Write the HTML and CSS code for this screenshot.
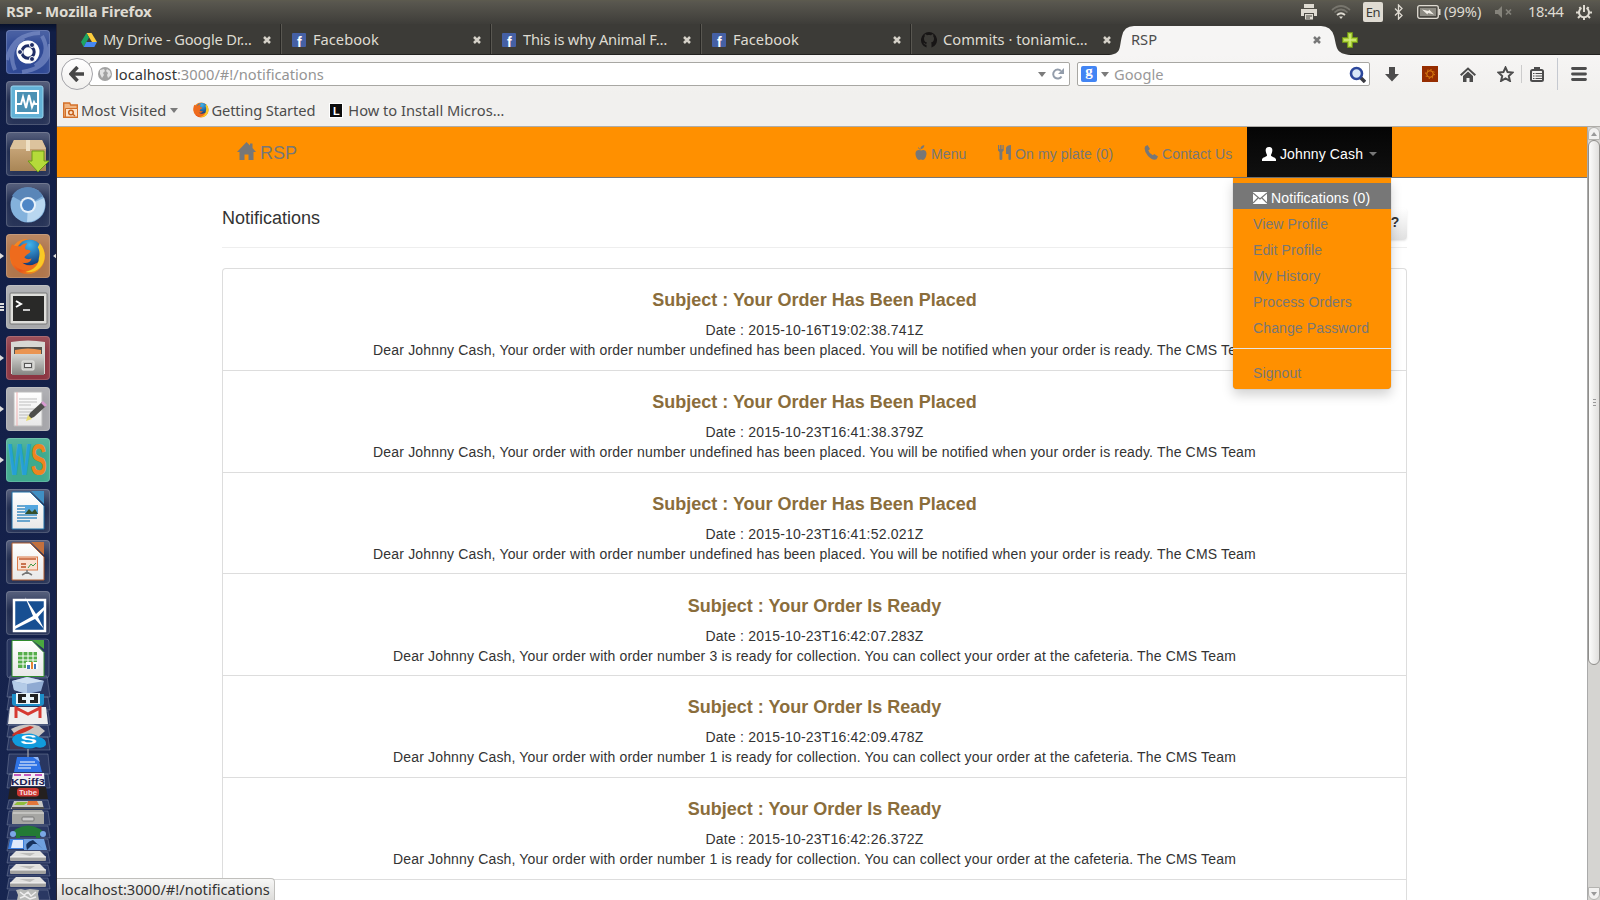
FILE: index.html
```html
<!DOCTYPE html>
<html lang="en">
<head>
<meta charset="utf-8">
<title>RSP</title>
<link rel="stylesheet" href="styles.css">
</head>
<body>
<svg class="defs" width="0" height="0">
  <defs>
    <linearGradient id="paper" x1="0" y1="0" x2="0" y2="1"><stop offset="0" stop-color="#fff"/><stop offset="1" stop-color="#e8e8e8"/></linearGradient>
    <linearGradient id="metal" x1="0" y1="0" x2="0" y2="1"><stop offset="0" stop-color="#d5d5d2"/><stop offset="1" stop-color="#858582"/></linearGradient>
    <linearGradient id="box" x1="0" y1="0" x2="0" y2="1"><stop offset="0" stop-color="#d0ae82"/><stop offset="1" stop-color="#a98656"/></linearGradient>
    <linearGradient id="flame" x1="0" y1="0" x2="1" y2="1"><stop offset="0" stop-color="#ff9a1f"/><stop offset=".6" stop-color="#e8541a"/><stop offset="1" stop-color="#f7b41c"/></linearGradient>
    <radialGradient id="globe" cx=".5" cy=".2" r=".8"><stop offset="0" stop-color="#3fb4ee"/><stop offset="1" stop-color="#123a78"/></radialGradient>
    <symbol id="x" viewBox="0 0 8 8"><path d="M1 1l6 6M7 1L1 7" stroke="currentColor" stroke-width="2.5"/></symbol>
    <symbol id="fb" viewBox="0 0 14 14"><rect width="14" height="14" rx="1" fill="#4560a5"/><text x="5" y="13.5" font-family="Liberation Sans" font-weight="700" font-size="14" fill="#fff">f</text></symbol>
    <symbol id="fox" viewBox="0 0 36 36">
      <circle cx="18" cy="18" r="17" fill="url(#flame)"/><circle cx="20" cy="14" r="12.5" fill="url(#globe)"/>
      <path d="M30 5c7 8 6 18 0 24-4 4-10 5-14 4 8-2 13-6 13-13 1-4 1-8-1-11z" fill="#f9c926"/>
      <path d="M3 6c2 2 5 2 8 2 2-2 4-3 7-3-2 2-3 4-2 6 2 1 4 0 5 2-1 3-5 3-6 6 2 2 4 2 7 1-1 4-5 5-9 4 4 4 10 4 14 0-2 8-15 10-21 3C-1 21 0 12 3 6z" fill="#ee6b1d"/>
    </symbol>
    <symbol id="drive" viewBox="0 0 38 12"><path d="M7 1h24l6 6H1z" fill="#e2e2e0"/><path d="M1 7h36v3q0 1-1 1H2q-1 0-1-1z" fill="#a2a2a0"/><path d="M1 7h36" stroke="#f4f4f4"/><path d="M10 3h16l-5 3z" fill="#bdbdbb"/></symbol>
  </defs>
</svg>

<header class="panel">
  <strong class="panel-title">RSP - Mozilla Firefox</strong>
  <div class="tray">
    <svg class="t-print" width="16" height="16" viewBox="0 0 16 16" fill="#dfdbd2"><path d="M3 0h10v4H3zM0 5h16v7h-3V9H3v3H0z"/><path d="M4 10h8v5.500H4z"/><path d="M5 12h6M5 14h4" stroke="#45443f"/></svg>
    <svg class="t-wifi" width="20" height="14" viewBox="0 0 20 14" fill="none" stroke-width="1.700"><path d="M1 5Q10-3 19 5M3.500 7.500q6.500-6 13 0" stroke="#77756d"/><path d="M6 10q4-3.500 8 0" stroke="#dfdbd2"/><path d="M8 11.500h4L10 14z" fill="#dfdbd2"/></svg>
    <span class="t-lang">En</span>
    <svg class="t-bt" width="10" height="16" viewBox="0 0 10 16" fill="none" stroke="#dfdbd2" stroke-width="1.300"><path d="M1 4.500l7 7-3.500 3.500V1L8 4.500l-7 7"/></svg>
    <svg class="t-bat" width="24" height="14" viewBox="0 0 24 14"><rect x=".7" y=".7" width="20.600" height="12.600" rx="2" fill="none" stroke="#dfdbd2" stroke-width="1.300"/><rect x="3" y="3" width="16" height="8" fill="#8d8b83"/><path d="M22 4h1.500v6H22" fill="#dfdbd2"/><path d="M5 4.500l6.500 1.500.5-1.500 5 5-6-1.500-.5 1.500z" fill="#f2efe8"/></svg>
    <span class="t-pct">(99%)</span>
    <svg class="t-vol" width="18" height="12" viewBox="0 0 18 12"><path d="M0 4h3l4-4v12L3 8H0z" fill="#85837b"/><path d="M11 3.500l5 5m0-5l-5 5" stroke="#85837b" stroke-width="1.700"/></svg>
    <span class="t-time">18:44</span>
    <svg class="t-gear" width="16" height="16" viewBox="0 0 16 16" fill="none" stroke="#dfdbd2"><path d="M5.500 4a5 5 0 1 0 5 0" stroke-width="2"/><path d="M8 1v7" stroke-width="2"/><path d="M3.500 3l1 1.500M12.500 3l-1 1.500M0 8.500h3M13 8.500h3M2 14l2-2M14 14l-2-2M8 13.500V16" stroke-width="2"/></svg>
  </div>
</header>

<div class="desktop">
<aside class="launcher">
  <svg class="tile" style="background:#304a96" viewBox="0 0 44 44"><path d="M1 30Q6 4 34 3M9 40Q0 18 18 8M44 14Q44 38 16 42M36 6q10 18-7 30" fill="none" stroke="#8496cb" stroke-width="4" opacity=".6"/><circle cx="22" cy="22" r="11.500" fill="#fff"/><circle cx="22" cy="22" r="6.200" fill="none" stroke="#1f2d66" stroke-width="3"/><g fill="#1f2d66" stroke="#fff" stroke-width="1"><circle cx="14" cy="22" r="2.500"/><circle cx="26" cy="15" r="2.500"/><circle cx="26" cy="29" r="2.500"/></g></svg>
  <svg class="tile" viewBox="0 0 44 44"><rect x="5" y="5" width="32" height="32" rx="2" fill="#63b1d6" stroke="#9bd6ee"/><rect x="10" y="10" width="22" height="22" fill="#4b91b4" stroke="#fff" stroke-width="2"/><path d="M11 23h4l2-7 3 11 3-13 3 12 2-5 1 2h3" fill="none" stroke="#fff" stroke-width="2"/></svg>
  <svg class="tile" viewBox="0 0 44 44"><path d="M4 16l4-8h28l4 8v23H4z" fill="url(#box)"/><path d="M4 17l4-9h28l4 9z" fill="#dcc39d"/><path d="M20 8h4v11h-4z" fill="#eee0c5"/><path d="M26 19h12v10h5L32 40 22 29h4z" fill="#b5da3a" stroke="#6c9a17"/></svg>
  <svg class="tile" viewBox="0 0 44 44"><circle cx="22" cy="22" r="17.500" fill="#84b2dc"/><path d="M22 22L6 13A18 18 0 0 1 37 13z" fill="#5a86b8"/><path d="M22 22l16-7a18 18 0 0 1-17 24z" fill="#b9d7f0"/><circle cx="22" cy="22" r="8" fill="#e8f1fa"/><circle cx="22" cy="22" r="6" fill="#4f86c6"/></svg>
  <div class="slot"><i class="arrow"></i><svg class="tile" style="background:#b0764c" viewBox="0 0 44 44"><use href="#fox" x="3" y="4" width="37" height="37"/></svg><i class="arrow arrow-r"></i></div>
  <div class="slot"><i class="bars"></i><svg class="tile" style="background:#a7a8ab" viewBox="0 0 44 44"><rect x="4" y="8" width="37" height="31" rx="1" fill="#dededb" stroke="#777"/><rect x="7" y="11" width="31" height="25" fill="#292928"/><path d="M10 16l5 3-5 3" fill="none" stroke="#fff" stroke-width="2"/><path d="M17 25h7" stroke="#fff" stroke-width="1.500"/></svg></div>
  <div class="slot"><i class="arrow"></i><svg class="tile" style="background:#8c3541" viewBox="0 0 44 44"><path d="M5 6q17-3 34 0v32H5z" fill="#d8d8d4"/><path d="M8 11h28v8H8z" fill="#55504b"/><path d="M9 14q13-3 26 0v5H9z" fill="#ea9451"/><path d="M6 18h32v21H6z" fill="url(#metal)"/><rect x="16" y="25" width="12" height="9" rx="1" fill="#c5c5c2" stroke="#e9e9e6"/><rect x="18.500" y="27.500" width="7" height="4" fill="#e9e9e9" stroke="#555"/></svg></div>
  <div class="slot"><i class="arrow"></i><svg class="tile" style="background:#a6a6aa" viewBox="0 0 44 44"><path d="M8 5h28v34H8z" fill="url(#paper)" stroke="#bbb"/><path d="M13 12h18M13 15h18M13 18h12M13 22h17M13 25h14M13 28h17M13 31h10" stroke="#bdbdbd"/><path d="M11 5v34" stroke="#efb1b1"/><path d="M21 33l3-7L36 15l4 4-12 11z" fill="#4d4d4a"/><path d="M35 16l2-2 4 4-2 2z" fill="#d79bd0"/><path d="M20 34l2-6 4 4z" fill="#e8da70"/></svg></div>
  <div class="slot"><i class="arrow"></i><div class="tile ws"><span>W</span><span>S</span></div></div>
  <svg class="tile" viewBox="0 0 44 44"><path d="M6 3h18l14 14v23H6z" fill="url(#paper)" stroke="#1e70a8"/><path d="M25 2h13v13z" fill="#3f8fc3"/><path d="M11 17h8M11 20h8M11 23h8M11 26h20M11 29h20M11 32h13" stroke="#3e8dc2" stroke-width="1.500"/><path d="M19 16h13v9H19z" fill="#53a6df"/><path d="M19 25l4-5 3 3 3-3 3 5z" fill="#34502b"/></svg>
  <svg class="tile" viewBox="0 0 44 44"><path d="M6 3h18l14 14v23H6z" fill="url(#paper)" stroke="#b05a2c"/><path d="M25 2h13v13z" fill="#c2703d"/><rect x="11.500" y="17" width="20" height="13" fill="#fae1d2" stroke="#dc7a49"/><path d="M13 19h17" stroke="#c2582e" stroke-width="1.500"/><path d="M15 24h5M15 27h5" stroke="#c9724e" stroke-width="2"/><path d="M22 28l3-4 2 2 3-3" stroke="#3c9a45" fill="none"/><path d="M21 30v4M16 35l5-3 5 3" stroke="#777" fill="none" stroke-width="1.500"/></svg>
  <svg class="tile" viewBox="0 0 44 44"><rect x="8" y="9" width="31" height="31" fill="#174f92" stroke="#fff" stroke-width="2.500"/><path d="M19 6l11 17 9-8v3l-7 8 6 12-9-10-20 10 0-3 18-10z" fill="#fff"/></svg>
  <svg class="stack" width="57" height="262" viewBox="0 638 57 262">
    <g fill="#8c9bc4" fill-opacity=".16" stroke="#929bb5" stroke-opacity=".4"><rect x="7" y="639" width="42" height="39" rx="3"/><path d="M10 676h37l3 21H7zM9 697h39l2 13H7zM9 711h39l2 14H7zM9 725h39l2 12H7zM9 737h39l2 13H7zM9 754h39l2 20H7zM9 774h39l2 14H7zM9 800h39l2 9H7zM9 811h39l2 14H7zM9 826h39l2 12H7zM9 839h39l2 12H7zM9 852h39l2 11H7zM9 865h39l2 11H7zM9 878h39l2 11H7zM9 890h39l2 10H7z"/></g>
    <path d="M12 640.500h20l12 12v24H12z" fill="url(#paper)" stroke="#2f8a2c"/><path d="M32 640h12v9z" fill="#4aa83f"/><path d="M18 652h19v16H18z" fill="#55ad4b"/><path d="M18 656h19M18 660h19M18 664h19M23 652v16M28 652v16M33 652v16" stroke="#fff"/><path d="M26 662h12v7H26z" fill="#fff"/><path d="M27 665h3v4h-3z" fill="#4378b8"/><path d="M31 662h2v7h-2z" fill="#e58335"/><path d="M34 664h2v5h-2z" fill="#4378b8"/>
    <path d="M12 681l15-4 17 4-3 10-14 3-13-4z" fill="#8faad2"/><path d="M12 681l15-4 17 4-17 3z" fill="#cfdff2"/><path d="M12 681l15 3v10l-13-4z" fill="#b4cbe7"/>
    <path d="M12 694h32v9q0 3-4 3H16q-4 0-4-3z" fill="#1c8ec9"/><path d="M16 693h24v11H16z" fill="#e8f4fa"/><path d="M18 694h8v3h-4v3h4v3h-8zM30 694h8v9h-8v-3h4v-3h-4z" fill="#222"/>
    <path d="M10 707h36l2 17H8z" fill="#eee"/><path d="M16 718v-10l12 6 12-6v10" fill="none" stroke="#d63a32" stroke-width="3"/>
    <path d="M11 729q14-7 28-3l6 5-8 7-21-2z" fill="#c9c5c2"/><path d="M12 735q4-5 18-9l4 1q-8 6-21 9z" fill="#c93328"/><path d="M10 741h15v8H10z" fill="#43364e"/>
    <path d="M12 739q3-6 12-5 9-2 15 3 8 2 7 8-3 4-10 2-7 3-14 0-9-1-10-8z" fill="#119bdc"/><text x="20" y="744" class="skype" textLength="17" lengthAdjust="spacingAndGlyphs">S</text>
    <path d="M28 749v9" stroke="#bbb"/><path d="M17 757h21l4 15H14z" fill="#2f73e5"/><path d="M33 757h5l2 5z" fill="#95b9f7"/><path d="M20 762h15M19 765h18M18 768h13" stroke="#fff" stroke-width="1.200"/>
    <path d="M13 773h31l1 13H11z" fill="#f1eff1"/><path d="M14 775h7M24 775h7M35 775h7" stroke="#c75ac0" stroke-width="2"/><text x="11" y="785" class="kdiff" textLength="34" lengthAdjust="spacingAndGlyphs">KDiff3</text>
    <path d="M10 787h36l2 12H8z" fill="#24201f"/><rect x="17" y="788" width="22" height="8.500" rx="3" fill="#cb3631"/><text x="19" y="795" class="tube" textLength="18" lengthAdjust="spacingAndGlyphs">Tube</text>
    <path d="M14 801h28l2 8H11z" fill="#c8c8c4"/><path d="M17 802h11l-4 3H14z" fill="#8fbd3b"/><path d="M28 801h9l2 4-12 0z" fill="#e1763b"/><path d="M12 807h32v2H12z" fill="#505050"/>
    <path d="M13 810h29l2 3v11H12v-11z" fill="#a6a6a3"/><path d="M13 813h31" stroke="#e0e0dd"/><rect x="22" y="817" width="12" height="4" rx="1" fill="#ccc" stroke="#777"/>
    <path d="M16 829q12-7 24 0l5 4-5 2v3h-4v-2H20v2h-4v-3l-5-1z" fill="#237a35"/><circle cx="13" cy="834" r="3" fill="#7aa7e5"/><circle cx="43" cy="834" r="3" fill="#7aa7e5"/>
    <path d="M10 839h14v10H8z" fill="#3d7fdd"/><path d="M13 840h10v8H11z" fill="#dfe9fa"/><path d="M24 839h20l3 11H24z" fill="#6fa0df"/><path d="M33 840q-9 2-6 10l6-6h4l6 5z" fill="#17325d"/>
    <use href="#drive" x="9" y="850" width="38" height="12"/><use href="#drive" x="9" y="863" width="38" height="12"/><use href="#drive" x="9" y="876" width="38" height="12"/>
    <path d="M16 890l5-1 4 1 5-1 9 1-1 4 1 6H17l1-5z" fill="#b8bab8"/><path d="M20 892l4 3 4-3 3 4 5-4M20 898l5-2 5 3 6-2" fill="none" stroke="#eee" stroke-width="1.500"/>
  </svg>
</aside>

<div class="browser">
  <div class="tabs">
    <div class="tab first"><svg width="16" height="14" viewBox="0 0 16 14"><path d="M5.500 0h5L16 9h-5z" fill="#fccd3d"/><path d="M5.500 0L8 4.500 2.700 14 0 9z" fill="#1da462"/><path d="M5.300 9H16l-2.700 5H2.700z" fill="#4688f4"/></svg><span class="u s1">My Drive - Google Dr…</span><svg class="close" viewBox="0 0 8 8"><use href="#x"/></svg></div>
    <div class="tab"><svg width="14" height="14"><use href="#fb"/></svg><span class="u">Facebook</span><svg class="close" viewBox="0 0 8 8"><use href="#x"/></svg></div>
    <div class="tab"><svg width="14" height="14"><use href="#fb"/></svg><span class="u s3">This is why Animal F…</span><svg class="close" viewBox="0 0 8 8"><use href="#x"/></svg></div>
    <div class="tab"><svg width="14" height="14"><use href="#fb"/></svg><span class="u">Facebook</span><svg class="close" viewBox="0 0 8 8"><use href="#x"/></svg></div>
    <div class="tab last"><svg width="16" height="16" viewBox="0 0 16 16"><path d="M8 0a8 8 0 0 0-2.500 15.600v-2.800c-2.200.4-2.600-1.800-3.400-2 1.500-.4 1.700 1.500 3.400 1 0-.5.300-1 .5-1.200C3.500 10.200 3 8 3 6.500q0-1.200.8-2.200-.3-1 .1-2c1 0 1.700.6 2.200.9 1.200-.3 2.600-.3 3.800 0 .5-.3 1.200-.9 2.200-.9q.4 1 .1 2 .8 1 .8 2.200c0 1.500-.5 3.700-3 4.100.4.400.5.800.5 1.500v3.500A8 8 0 0 0 8 0z" fill="#171515"/></svg><span class="u">Commits · toniamic…</span><svg class="close" viewBox="0 0 8 8"><use href="#x"/></svg></div>
    <div class="active-tab">
      <svg class="curve" width="242" height="30" viewBox="0 0 242 30"><path d="M0 30C13 29 10 22 13 11Q15 1 25 1H212Q222 1 225 11C228 22 226 29 242 30z" fill="#f6f5f4"/></svg>
      <span class="u">RSP</span><svg class="close" viewBox="0 0 8 8"><use href="#x"/></svg>
    </div>
    <svg class="newtab" width="16" height="16" viewBox="0 0 16 16"><path d="M5.500.5h5v5h5v5h-5v5h-5v-5h-5v-5h5z" fill="#a9cf35" stroke="#6d8f1b"/><path d="M8 2v12M2 8h12" stroke="#d5ec80" stroke-width="1.500"/></svg>
  </div>

  <div class="navrow">
    <div class="back"><svg width="16" height="16" viewBox="0 0 16 16"><path d="M8.500 1L2 8l6.500 7M2.500 8H15" fill="none" stroke="#474747" stroke-width="3.500"/></svg></div>
    <div class="url">
      <svg width="14" height="14" viewBox="0 0 14 14"><circle cx="7" cy="7" r="7" fill="#a2a2a2"/><path d="M2 3l4-1 1 2-2 2 1 2-2 3-2-4zM9 2l3 2 1 4-3 3-1-3 1-2-2-2z" fill="#e2e2e2"/></svg>
      <span class="u"><b>localhost</b>:3000/#!/notifications</span>
      <i class="tri"></i>
      <svg class="reload" width="12" height="12" viewBox="0 0 12 12"><path d="M9.500 8.500A4.500 4.500 0 1 1 9 3" fill="none" stroke="#939dab" stroke-width="2"/><path d="M12 0v6H6z" fill="#939dab"/></svg>
    </div>
    <div class="search">
      <span class="g">g</span>
      <i class="tri"></i><span class="u">Google</span>
      <svg class="mag" width="17" height="17" viewBox="0 0 17 17"><path d="M11 11l5 5" stroke="#3b3b42" stroke-width="3.500"/><circle cx="7.500" cy="7.500" r="5.500" fill="#d9e8f8" stroke="#2c479b" stroke-width="2.600"/></svg>
    </div>
    <div class="tools">
      <svg class="i-down" width="14" height="15" viewBox="0 0 14 15"><path d="M4 0h6v7h4l-7 7.500L0 7h4z" fill="#4c4c4c"/></svg>
      <svg class="i-red" width="16" height="16" viewBox="0 0 16 16"><path d="M0 0h16v16H0z" fill="#962d00"/><circle cx="8" cy="8" r="3.300" fill="none" stroke="#e58b12" stroke-width="1"/><circle cx="8" cy="8" r="4.500" fill="none" stroke="#e58b12" stroke-width="1" stroke-dasharray="1.200 2.334"/></svg>
      <svg class="i-home" width="16" height="15" viewBox="0 0 16 15"><path d="M.7 8.300L8 1.500l7.300 6.800" fill="none" stroke="#4c4c4c" stroke-width="2"/><path d="M3 9l5-4.600L13 9v6H9.500v-4h-3v4H3z" fill="#4c4c4c"/></svg>
      <svg class="i-star" width="17" height="16" viewBox="0 0 17 16"><path d="M8.500 1.500l2.100 4.600 4.900.5-3.700 3.400 1.100 4.900-4.400-2.600-4.400 2.600 1.100-4.900L1.500 6.600l4.900-.5z" fill="none" stroke="#4c4c4c" stroke-width="2"/></svg>
      <i class="sep"></i>
      <svg class="i-list" width="14" height="15" viewBox="0 0 14 15"><rect x="1" y="3" width="12" height="11" rx="1.500" fill="none" stroke="#4c4c4c" stroke-width="2"/><path d="M4 0h6v4H4z" fill="#4c4c4c"/><path d="M3 6.500h1.500M5.500 6.500H12M3 9h1.500M5.500 9H12M3 11.500h1.500M5.500 11.500H12" stroke="#4c4c4c" stroke-width="1.200"/></svg>
      <i class="sep tall"></i>
      <svg class="i-menu" width="16" height="14" viewBox="0 0 16 14"><path d="M1.500 1.500h13M1.500 7h13M1.500 12.500h13" stroke="#4c4c4c" stroke-width="2.800" stroke-linecap="round"/></svg>
    </div>
  </div>

  <div class="bookmarks">
    <svg width="15" height="16" viewBox="0 0 15 16"><path d="M.7 15.300V1h6l1 2h6.600v12.300z" fill="#f0b684" stroke="#d3702a" stroke-width="1.400"/><path d="M2.500 6.500h12v8.500h-12z" fill="#fbe2c9" stroke="#d3702a"/><circle cx="8" cy="10.500" r="2.300" fill="none" stroke="#c6601c" stroke-width="1.500"/><path d="M9.500 12l2.500 2" stroke="#c6601c" stroke-width="1.500"/></svg>
    <span class="u b1">Most Visited</span><i class="tri"></i>
    <svg class="b-fox" width="16" height="16"><use href="#fox"/></svg><span class="u b2">Getting Started</span>
    <svg class="b-l" width="14" height="15" viewBox="0 0 14 15"><path d="M0 0h14v15H0z" fill="#fff"/><path d="M1 1h12v13H1z" fill="#0c0c0c"/><text x="4" y="11.500" font-family="Liberation Sans" font-weight="700" font-size="11" fill="#fff">L</text></svg><span class="u b3">How to Install Micros…</span>
  </div>

  <div class="view">
    <main class="page">
      <nav class="navbar">
        <a class="brand"><svg width="19" height="18" viewBox="0 0 19 18"><path d="M9.500 0l3.500 3.500V1.500h2.500V6L19 10h-2.500v8H11.500v-5.500h-4V18H2.500v-8H0z" fill="#777"/></svg>RSP</a>
        <a class="n1"><svg width="12" height="15" viewBox="0 0 12 15" fill="#777"><path d="M6 5.500c2-1.200 5.500-.7 5.500 3 0 3-2 6.500-3.700 6.500-.9 0-1.100-.4-1.800-.4s-.9.400-1.800.4C2.500 15 .5 11.500.5 8.500c0-3.700 3.500-4.200 5.500-3z"/><path d="M5.500 4.200C5.200 1.700 7.500.2 9.300 0c.3 2-1.300 4-3.800 4.200z"/><path d="M3 2.500l2.500 2.300" stroke="#777"/></svg>Menu</a>
        <a class="n2"><svg width="14" height="15" viewBox="0 0 14 15" fill="#777"><path d="M0 0h1.200v4h.9V0h1.500v4h.9V0h1.200v5.500L4.300 7v7q0 1-1.400 1T1.500 14V7L0 5.500zM8 3q1-3 5-3v14q0 1-1.300 1t-1.300-1V9H8z"/></svg>On my plate (0)</a>
        <a class="n3"><svg width="14" height="15" viewBox="0 0 14 15" fill="#777"><path d="M1 1.500L3.500 0 6 4 4.300 5.500q1 3 4.500 4.800L10.300 9l3.700 2.500-1.500 2.800q-4 1.500-8.500-3.300T1 1.500z"/></svg>Contact Us</a>
        <div class="user"><a class="user-link"><svg width="14" height="14" viewBox="0 0 14 14"><path d="M7 0c3 0 3.500 2 3.300 4C10 6.500 9 7 9 8.500c0 1 5 2 5 4V14H0v-1.500c0-2 5-3 5-4C5 7 4 6.500 3.700 4 3.500 2 4 0 7 0z" fill="#fff"/></svg>Johnny Cash<i class="caret"></i></a>
          <ul class="menu">
            <li class="on"><svg width="14" height="12" viewBox="0 0 14 12"><path d="M0 0h14v12H0z" fill="#fff"/><path d="M0 1l7 6 7-6M0 11l5-5M14 11L9 6" fill="none" stroke="#777" stroke-width="1.200"/></svg>Notifications (0)</li>
            <li>View Profile</li><li>Edit Profile</li><li>My History</li><li>Process Orders</li><li>Change Password</li>
            <li class="divider"></li><li>Signout</li>
          </ul>
        </div>
      </nav>
      <section class="content">
        <div class="head"><h1>Notifications</h1><button class="help">?</button></div>
        <div class="list">
          <article><h4>Subject : Your Order Has Been Placed</h4><p class="date">Date : 2015-10-16T19:02:38.741Z</p><p>Dear Johnny Cash, Your order with order number undefined has been placed. You will be notified when your order is ready. The CMS Team</p></article>
          <article><h4>Subject : Your Order Has Been Placed</h4><p class="date">Date : 2015-10-23T16:41:38.379Z</p><p>Dear Johnny Cash, Your order with order number undefined has been placed. You will be notified when your order is ready. The CMS Team</p></article>
          <article><h4>Subject : Your Order Has Been Placed</h4><p class="date">Date : 2015-10-23T16:41:52.021Z</p><p>Dear Johnny Cash, Your order with order number undefined has been placed. You will be notified when your order is ready. The CMS Team</p></article>
          <article><h4>Subject : Your Order Is Ready</h4><p class="date">Date : 2015-10-23T16:42:07.283Z</p><p>Dear Johnny Cash, Your order with order number 3 is ready for collection. You can collect your order at the cafeteria. The CMS Team</p></article>
          <article><h4>Subject : Your Order Is Ready</h4><p class="date">Date : 2015-10-23T16:42:09.478Z</p><p>Dear Johnny Cash, Your order with order number 1 is ready for collection. You can collect your order at the cafeteria. The CMS Team</p></article>
          <article><h4>Subject : Your Order Is Ready</h4><p class="date">Date : 2015-10-23T16:42:26.372Z</p><p>Dear Johnny Cash, Your order with order number 1 is ready for collection. You can collect your order at the cafeteria. The CMS Team</p></article>
          <article></article>
        </div>
      </section>
      <div class="status u"><span>localhost:3000/#!/notifications</span></div>
    </main>
    <div class="scrollbar"><i class="sb-btn"></i><i class="thumb"><b></b></i><i class="sb-btn down"></i></div>
  </div>
</div>
</div>
</body>
</html>
```
FILE: styles.css
```css
* { box-sizing: border-box; }
html, body { margin: 0; height: 100%; overflow: hidden; }
body { width: 1600px; height: 900px; font: 14px/20px "Liberation Sans", Arial, sans-serif; color: #333; background: #fff; }
svg { display: block; flex: none; }
.defs { position: absolute; }
.u, .panel { font-family: "Noto Sans", "Open Sans", sans-serif; font-size: 14.67px; line-height: 20px; white-space: nowrap; }

/* top panel */
.panel { display: flex; align-items: center; justify-content: space-between; height: 24px; padding: 0 8px 0 6px; color: #dfdbd2; background: linear-gradient(#5d5b4e 0, #59574f 2px, #3e3d39 100%); }
.panel-title { margin-top: -2px; font-size: 15px; letter-spacing: -.15px; }
.tray { display: flex; align-items: center; }
.t-wifi { margin-left: 14px; }
.t-lang { width: 20px; height: 20px; margin-left: 12px; border-radius: 2px; background: #dfdbd2; color: #3c3b37; text-align: center; font-size: 13px; letter-spacing: -.5px; }
.t-bt { margin-left: 11px; }
.t-bat { margin-left: 13px; }
.t-pct { width: 39px; margin: -2px 0 0 3px; letter-spacing: -.1px; }
.t-vol { margin-left: 12px; }
.t-time { width: 37px; margin: -2px 0 0 15px; letter-spacing: -.4px; }
.t-gear { margin-left: 11px; }

.desktop { display: flex; height: 876px; }

/* launcher */
.launcher { width: 57px; flex: none; display: flex; flex-direction: column; align-items: center; gap: 7px; padding-top: 6px; overflow: hidden; border-right: 1px solid #2a2631; background: linear-gradient(#07112b, #111e46 8px, #142049 50%, #172550); }
.tile { width: 44px; height: 44px; flex: none; border-radius: 4px; background: linear-gradient(#3f496a, #1d294d 45%, #2a365a); box-shadow: inset 0 0 0 1px rgba(255,255,255,.16), inset 0 9px 9px rgba(255,255,255,.13); }
.slot { width: 57px; height: 44px; display: flex; align-items: center; }
.slot .tile { margin: 0 0 0 6px; }
.slot .arrow { width: 4px; margin-right: -4px; border: 3px solid transparent; border-left: 4px solid #ddd; border-right: 0; }
.slot .arrow-r { margin: 0 0 0 3px; border-left: 0; border-right: 4px solid #ddd; }
.bars { width: 4px; height: 8px; margin-right: -4px; background: repeating-linear-gradient(#ddd 0 2px, transparent 2px 3px); }
.stack { margin-top: -4px; }
.tile.ws { display: flex; justify-content: center; background: #3faa8e; font: 700 24px/44px "Liberation Sans", sans-serif; }
.ws span { color: #25a0d6; transform: scaleY(1.85); }
.ws span + span { color: #ee8420; }
.skype { font: 700 13px "Liberation Sans"; fill: #fff; }
.kdiff { font: 700 9px "Liberation Sans"; fill: #1c1c50; }
.tube { font: 700 8px "Liberation Sans"; fill: #f6dede; }

/* browser chrome */
.browser { flex: 1; min-width: 0; display: flex; flex-direction: column; background: #f1f0ee; }
.tabs { display: flex; align-items: stretch; height: 31px; padding-left: 15px; background: #3c3b37; border-bottom: 1px solid #22211f; color: #dfdbd2; flex: none; }
.tab { display: flex; align-items: center; gap: 7px; width: 210px; height: 30px; padding: 1px 10px 0 10px; border-right: 1px solid #595751; box-shadow: inset -1px 0 #282724; flex: none; }
.tab.first { padding-left: 9px; gap: 6px; }
.tab.last { border: 0; box-shadow: none; width: 208px; padding: 1px 9px 0 9px; gap: 6px; }
.tabs .u { margin-top: -2px; }
.close { width: 8px; height: 8px; margin-left: auto; color: #d5d1c8; }
.s1 { letter-spacing: -.18px; }
.s3 { letter-spacing: -.2px; }
.active-tab { position: relative; width: 221px; height: 31px; display: flex; align-items: center; padding: 0 21px 0 10px; margin-left: 1px; color: #4c4c4c; flex: none; }
.active-tab > * { position: relative; }
.active-tab .close { color: #777; }
.active-tab .curve { position: absolute; left: -12px; top: 1px; }
.newtab { margin: 8px 0 0 0; }

.navrow { display: flex; align-items: center; height: 38px; padding-left: 4px; background: linear-gradient(#f6f5f4, #f1f0ee); flex: none; }
.back { position: relative; z-index: 1; display: grid; place-items: center; width: 32px; height: 32px; border: 1px solid #a3a3a8; border-radius: 50%; background: linear-gradient(#fff, #f0efed); flex: none; }
.url, .search { display: flex; align-items: center; height: 24px; border: 1px solid #a8a7a3; border-radius: 2px; background: #fff; }
.url { width: 981px; margin-left: -4px; padding: 0 5px 0 8px; color: #949494; flex: none; }
.url .u { margin: -1px 0 0 3px; }
.url b { color: #333; font-weight: 400; }
.tri { border: 4px solid transparent; border-top: 5px solid #7b7b7b; border-bottom: 0; }
.url .tri { margin-left: auto; }
.reload { margin-left: 6px; }
.search { width: 293px; margin-left: 7px; padding: 0 3px; flex: none; }
.g { width: 16px; height: 16px; border-radius: 2px; background: #4285f4; color: #fff; font: 700 15px/11px "Liberation Serif", serif; text-align: center; }
.search .tri { margin-left: 4px; }
.search .u { margin: -1px 0 0 5px; color: #999; }
.mag { margin-left: auto; }
.tools { display: flex; align-items: center; }
.i-down { margin-left: 15px; }
.i-red { margin-left: 23px; }
.i-home { margin-left: 22px; }
.i-star { margin-left: 21px; }
.sep { width: 1px; height: 18px; margin: 0 8px 0 7px; background: #ccc; }
.sep.tall { height: 32px; margin: 0 13px; background: #c5c9d0; }

.bookmarks { display: flex; align-items: center; height: 33px; padding-left: 6px; padding-top: 1px; color: #4c4c4c; flex: none; }
.bookmarks .u { margin-left: 3px; }
.bookmarks .tri { margin-left: 4px; }
.b1 { letter-spacing: .1px; }
.b2 { letter-spacing: -.1px; }
.b-fox { margin-left: 15px; }
.bookmarks .b2 { margin-left: 2px; }
.b-l { margin-left: 14px; }
.bookmarks .b3 { margin-left: 5px; }

/* page */
.view { display: flex; flex: 1; min-height: 0; border-top: 1px solid #aeaca8; }
.page { position: relative; flex: 1; min-width: 0; background: #fff; overflow: hidden; }
.navbar { display: flex; height: 51px; padding-left: 180px; background: #ff9000; border-bottom: 1px solid #777; color: #777; letter-spacing: .12px; }
.navbar a { display: flex; align-items: center; padding-top: 4px; white-space: nowrap; }
.navbar .brand { width: 678px; padding-top: 1px; font-size: 18px; gap: 4px; letter-spacing: 0; }
.brand svg { margin-top: -3px; }
.n1, .n2, .n3 { gap: 4px; }
.n1 svg, .n2 svg, .n3 svg { margin-top: -4px; }
.n1 { width: 83px; }
.n2 { width: 146px; gap: 3px; }
.n3 { width: 103px; }
.user { position: relative; width: 145px; height: 50px; background: linear-gradient(#050505, #101010); }
.navbar .user-link { height: 50px; padding-left: 15px; padding-top: 3px; color: #fff; gap: 4px; }
.caret { margin-left: 2px; border: 4px solid transparent; border-top-color: #777; border-bottom: 0; }
.menu { position: absolute; z-index: 3; top: 51px; right: 1px; width: 158px; height: 211px; margin: 0; padding: 5px 0; list-style: none; background: #ff9000; border-radius: 0 0 4px 4px; box-shadow: 0 6px 12px rgba(0,0,0,.175), 0 0 1px rgba(0,0,0,.4); white-space: nowrap; }
.menu li { display: flex; align-items: center; gap: 4px; height: 26px; padding: 5px 20px 1px; }
.menu .on { background: #777; color: #fff; }
.menu .divider { height: 1px; margin: 9px 0; padding: 0; background: #e5e5e5; }

.content { width: 1185px; margin-left: 165px; }
.head { display: flex; justify-content: space-between; align-items: flex-start; height: 70px; padding-top: 30px; border-bottom: 1px solid #eee; }
h1 { margin: 0; font-size: 18px; line-height: 20px; font-weight: 400; }
.help { width: 32px; height: 32px; padding: 0 0 4px 8px; border: 0; border-radius: 4px; background: linear-gradient(#fff, #e0e0e0); color: #333; box-shadow: 0 1px 2px rgba(0,0,0,.1); font: 700 14px/20px "Liberation Sans"; }
.list { margin-top: 20px; border: 1px solid #ddd; border-bottom: 0; border-radius: 4px 4px 0 0; text-align: center; }
article { height: 101.8px; padding-top: 22.2px; border-bottom: 1px solid #ddd; }
h4 { margin: 0 0 9.2px; font-size: 18px; line-height: 19.8px; color: #8a6d3b; }
p { margin: 0; letter-spacing: .16px; }
.date { letter-spacing: .2px; }
.status { position: absolute; left: 0; bottom: 0; width: 218px; height: 22px; padding: 0 4px; background: linear-gradient(#f7f7f6, #dddcda); border: 1px solid #c0bfbc; border-width: 1px 1px 0 0; border-radius: 0 4px 0 0; }

.scrollbar { display: flex; flex-direction: column; width: 13px; background: #d5d4d1; border-left: 1px solid #aaa; flex: none; }
.sb-btn { display: grid; place-items: center; height: 13px; border: 1px solid #b4b3b0; border-radius: 6px 6px 0 0; background: #f2f1f0; }
.sb-btn::after { content: ""; border: 3px solid transparent; border-bottom: 4px solid #999; border-top: 0; }
.down { margin-top: auto; border-radius: 0 0 6px 6px; }
.down::after { transform: rotate(180deg); }
.thumb { display: grid; place-items: center; height: 525px; border: 1px solid #8f8e8b; border-radius: 6px; background: linear-gradient(90deg, #fcfcfb, #e0dfdd); }
.thumb b { width: 3px; height: 8px; background: repeating-linear-gradient(#999 0 1px, transparent 1px 3px); }
```
